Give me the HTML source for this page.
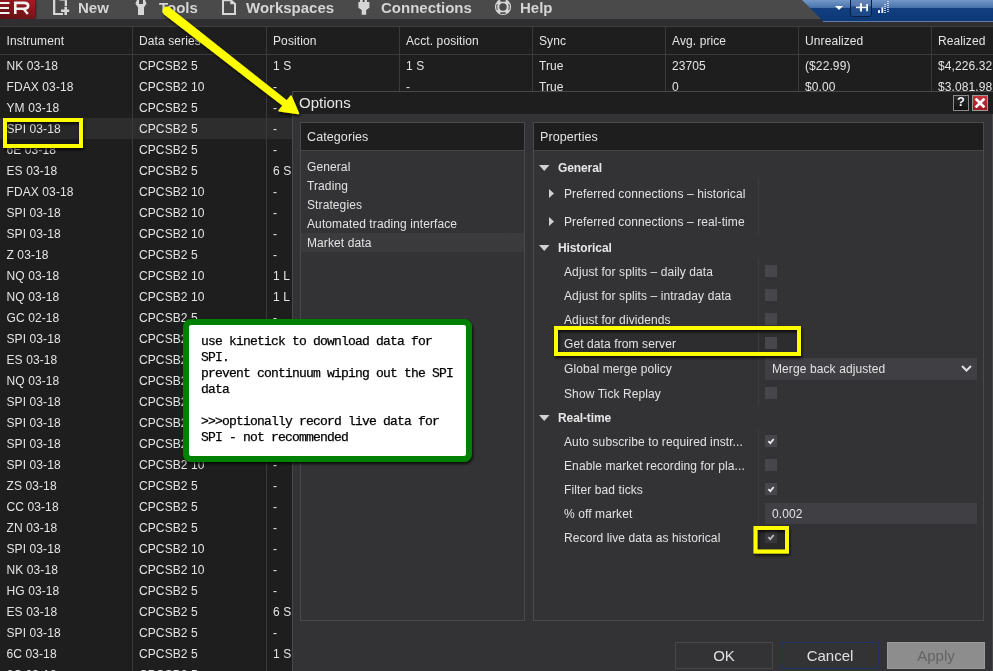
<!DOCTYPE html><html><head><meta charset="utf-8"><style>
*{margin:0;padding:0;box-sizing:border-box}
html,body{width:993px;height:671px;overflow:hidden;will-change:transform;background:#1e1e1e;font-family:"Liberation Sans",sans-serif;font-size:12px;color:#e4e4e4;letter-spacing:0.1px}
.a{position:absolute}
.t{position:absolute;white-space:nowrap;line-height:21px;height:21px}
.vl{position:absolute;width:1px;background:#3a3a3c}
.tbt{position:absolute;top:-1px;font-weight:bold;font-size:15px;color:#d4d4d4;line-height:18px;letter-spacing:0}
.p{position:absolute;white-space:nowrap;line-height:14px;color:#e2e2e2}
.pb{font-weight:bold;color:#e6e6e6;letter-spacing:-0.1px}
.cb{position:absolute;left:765px;width:12px;height:12px;background:#46464b}
.dv{position:absolute;left:758px;width:1px;background:#3c3c3e}
.btn{position:absolute;top:642px;height:27px;font-size:15px;line-height:25px;text-align:center;letter-spacing:0}
</style></head><body>

<div class="a" style="left:0;top:0;width:993px;height:19px;background:#4a4a4a"></div>
<div class="a" style="left:0;top:0;width:35px;height:19px;background:linear-gradient(20deg,#5c0e12 0%,#7a1519 45%,#a51c22 100%);box-shadow:1px 0 2px #222"></div>
<svg class="a" style="left:0;top:0" width="40" height="19"><g fill="none" stroke="#f2f2f2" stroke-width="2"><path d="M0 2.9 H9.5 M0 8 H9 M0 12.9 H9.5"/><path d="M15.3 14 V2.9 H24 Q28.2 2.9 28.2 5.8 Q28.2 8.7 24 8.7 H15.3" stroke-width="2.6"/><path d="M23.5 8.7 L27.8 14" stroke-width="2.4"/></g></svg>
<div class="tbt" style="left:78px">New</div>
<div class="tbt" style="left:159px">Tools</div>
<div class="tbt" style="left:246px">Workspaces</div>
<div class="tbt" style="left:381px">Connections</div>
<div class="tbt" style="left:520px">Help</div>
<svg class="a" style="left:0;top:0" width="993" height="19">
<path d="M53 0 H55.3 V12.9 H63 V14.9 H53 Z M64.7 0 H67 V6 H64.7 Z M61 9.6 H69.2 V12 H61 Z M64.4 6.8 H67 V15 H64.4 Z" fill="#d6d6d6"/>
<path d="M59.5 0 H66.8 V1 H59.5 Z" fill="#bdbdbd" opacity="0.7"/>
<path d="M137 0 L135.4 3.5 L138 7.6 V15 H144 V7.6 L146.5 3.5 L145 0 H143 V4 H139 V0 Z" fill="#d6d6d6"/>
<path fill-rule="evenodd" d="M222 0 H232 L236 3.5 V15 H222 Z M224 1.3 V12.9 H234 V4.2 H230.3 V1.3 Z" fill="#d6d6d6"/>
<path d="M360 0 H362.7 V2.1 H364.6 V0 H367 V2.1 H369.4 V7.8 L366.2 10 V14.7 H361.7 V10 L358.4 7.8 V2.1 H360 Z" fill="#d6d6d6"/>
<circle cx="503" cy="7" r="5.9" fill="none" stroke="#d6d6d6" stroke-width="4.4"/>
<rect x="500.3" y="-0.5" width="5.4" height="2.2" fill="#4a4a4a"/><rect x="500.3" y="12.3" width="5.4" height="1.6" fill="#4a4a4a"/>
<path d="M497.2 4 Q496.2 7 497.2 10 M508.8 4 Q509.8 7 508.8 10" stroke="#4a4a4a" stroke-width="1" fill="none"/>
</svg>
<div class="a" style="left:0;top:19px;width:993px;height:7px;background:#2f2f31"></div>
<div class="a" style="left:0;top:26px;width:993px;height:1px;background:#3d3d3f"></div>
<div class="a" style="left:0;top:54px;width:993px;height:1px;background:#3a3a3c"></div>
<svg class="a" style="left:0;top:0" width="993" height="24">
<defs><linearGradient id="bg1" x1="0" y1="0" x2="0" y2="22" gradientUnits="userSpaceOnUse">
<stop offset="0" stop-color="#7397c8"/><stop offset="0.34" stop-color="#4b75ae"/><stop offset="0.36" stop-color="#123f80"/><stop offset="1" stop-color="#0d3877"/></linearGradient></defs>
<path d="M802 0 L993 0 L993 22 L824 22 Z" fill="url(#bg1)"/>
<path d="M823 21.5 L993 21.5" stroke="#5f7aa3" stroke-width="1.2"/>
<path d="M835 6 L843 6 L839 10 Z" fill="#ffffff"/>
<defs><linearGradient id="bg2" x1="0" y1="0" x2="0" y2="1"><stop offset="0" stop-color="#6a8cc0"/><stop offset="0.45" stop-color="#5577ad"/><stop offset="0.5" stop-color="#234f8d"/><stop offset="1" stop-color="#1d4886"/></linearGradient></defs>
<rect x="850.5" y="-3" width="21" height="19.5" rx="2.5" fill="url(#bg2)" stroke="#0b1f45" stroke-width="1"/>
<path d="M856 7.4 H868" stroke="#f4f4f4" stroke-width="1.6" fill="none"/>
<path d="M859.9 3.2 H862 V11.6 H859.9 Z M866.2 3.9 H868 V11.3 H866.2 Z" fill="#f4f4f4"/>
<rect x="878" y="10.2" width="2" height="2.8" fill="#fff"/><rect x="881.4" y="7.4" width="1.8" height="5.6" fill="#fff"/>
<path d="M885 4 V13 M888 1 V13" stroke="#e6e6e6" stroke-width="1.6" stroke-dasharray="1 1" fill="none"/>
</svg>
<div class="t" style="left:6.5px;top:31px">Instrument</div>
<div class="t" style="left:139px;top:31px">Data series</div>
<div class="t" style="left:273px;top:31px">Position</div>
<div class="t" style="left:406px;top:31px">Acct. position</div>
<div class="t" style="left:539px;top:31px">Sync</div>
<div class="t" style="left:672px;top:31px">Avg. price</div>
<div class="t" style="left:805px;top:31px">Unrealized</div>
<div class="t" style="left:938px;top:31px">Realized</div>
<div class="a" style="left:0;top:118px;width:993px;height:21px;background:#2d2d2e"></div>
<div class="a" style="left:7px;top:122px;width:72px;height:22px;background:rgba(0,0,0,0.1)"></div>
<div class="vl" style="left:132px;top:27px;height:644px"></div>
<div class="vl" style="left:266px;top:27px;height:644px"></div>
<div class="vl" style="left:399px;top:27px;height:644px"></div>
<div class="vl" style="left:532px;top:27px;height:644px"></div>
<div class="vl" style="left:665px;top:27px;height:644px"></div>
<div class="vl" style="left:798px;top:27px;height:644px"></div>
<div class="vl" style="left:931px;top:27px;height:644px"></div>
<div class="t" style="left:6.5px;top:56px">NK 03-18</div>
<div class="t" style="left:139px;top:56px">CPCSB2 5</div>
<div class="t" style="left:273px;top:56px">1 S</div>
<div class="t" style="left:406px;top:56px">1 S</div>
<div class="t" style="left:539px;top:56px">True</div>
<div class="t" style="left:672px;top:56px">23705</div>
<div class="t" style="left:805px;top:56px">($22.99)</div>
<div class="t" style="left:938px;top:56px">$4,226.32</div>
<div class="t" style="left:6.5px;top:77px">FDAX 03-18</div>
<div class="t" style="left:139px;top:77px">CPCSB2 10</div>
<div class="t" style="left:273px;top:77px">-</div>
<div class="t" style="left:406px;top:77px">-</div>
<div class="t" style="left:539px;top:77px">True</div>
<div class="t" style="left:672px;top:77px">0</div>
<div class="t" style="left:805px;top:77px">$0.00</div>
<div class="t" style="left:938px;top:77px">$3,081.98</div>
<div class="t" style="left:6.5px;top:98px">YM 03-18</div>
<div class="t" style="left:139px;top:98px">CPCSB2 5</div>
<div class="t" style="left:273px;top:98px">-</div>
<div class="t" style="left:6.5px;top:119px">SPI 03-18</div>
<div class="t" style="left:139px;top:119px">CPCSB2 5</div>
<div class="t" style="left:273px;top:119px">-</div>
<div class="t" style="left:6.5px;top:140px">6E 03-18</div>
<div class="t" style="left:139px;top:140px">CPCSB2 5</div>
<div class="t" style="left:273px;top:140px">-</div>
<div class="t" style="left:6.5px;top:161px">ES 03-18</div>
<div class="t" style="left:139px;top:161px">CPCSB2 5</div>
<div class="t" style="left:273px;top:161px">6 S</div>
<div class="t" style="left:6.5px;top:182px">FDAX 03-18</div>
<div class="t" style="left:139px;top:182px">CPCSB2 10</div>
<div class="t" style="left:273px;top:182px">-</div>
<div class="t" style="left:6.5px;top:203px">SPI 03-18</div>
<div class="t" style="left:139px;top:203px">CPCSB2 10</div>
<div class="t" style="left:273px;top:203px">-</div>
<div class="t" style="left:6.5px;top:224px">SPI 03-18</div>
<div class="t" style="left:139px;top:224px">CPCSB2 10</div>
<div class="t" style="left:273px;top:224px">-</div>
<div class="t" style="left:6.5px;top:245px">Z 03-18</div>
<div class="t" style="left:139px;top:245px">CPCSB2 5</div>
<div class="t" style="left:273px;top:245px">-</div>
<div class="t" style="left:6.5px;top:266px">NQ 03-18</div>
<div class="t" style="left:139px;top:266px">CPCSB2 10</div>
<div class="t" style="left:273px;top:266px">1 L</div>
<div class="t" style="left:6.5px;top:287px">NQ 03-18</div>
<div class="t" style="left:139px;top:287px">CPCSB2 10</div>
<div class="t" style="left:273px;top:287px">1 L</div>
<div class="t" style="left:6.5px;top:308px">GC 02-18</div>
<div class="t" style="left:139px;top:308px">CPCSB2 5</div>
<div class="t" style="left:273px;top:308px">-</div>
<div class="t" style="left:6.5px;top:329px">SPI 03-18</div>
<div class="t" style="left:139px;top:329px">CPCSB2 5</div>
<div class="t" style="left:273px;top:329px">-</div>
<div class="t" style="left:6.5px;top:350px">ES 03-18</div>
<div class="t" style="left:139px;top:350px">CPCSB2 5</div>
<div class="t" style="left:273px;top:350px">6 S</div>
<div class="t" style="left:6.5px;top:371px">NQ 03-18</div>
<div class="t" style="left:139px;top:371px">CPCSB2 10</div>
<div class="t" style="left:273px;top:371px">1 L</div>
<div class="t" style="left:6.5px;top:392px">SPI 03-18</div>
<div class="t" style="left:139px;top:392px">CPCSB2 5</div>
<div class="t" style="left:273px;top:392px">-</div>
<div class="t" style="left:6.5px;top:413px">SPI 03-18</div>
<div class="t" style="left:139px;top:413px">CPCSB2 5</div>
<div class="t" style="left:273px;top:413px">-</div>
<div class="t" style="left:6.5px;top:434px">SPI 03-18</div>
<div class="t" style="left:139px;top:434px">CPCSB2 5</div>
<div class="t" style="left:273px;top:434px">-</div>
<div class="t" style="left:6.5px;top:455px">SPI 03-18</div>
<div class="t" style="left:139px;top:455px">CPCSB2 10</div>
<div class="t" style="left:273px;top:455px">-</div>
<div class="t" style="left:6.5px;top:476px">ZS 03-18</div>
<div class="t" style="left:139px;top:476px">CPCSB2 5</div>
<div class="t" style="left:273px;top:476px">-</div>
<div class="t" style="left:6.5px;top:497px">CC 03-18</div>
<div class="t" style="left:139px;top:497px">CPCSB2 5</div>
<div class="t" style="left:273px;top:497px">-</div>
<div class="t" style="left:6.5px;top:518px">ZN 03-18</div>
<div class="t" style="left:139px;top:518px">CPCSB2 5</div>
<div class="t" style="left:273px;top:518px">-</div>
<div class="t" style="left:6.5px;top:539px">SPI 03-18</div>
<div class="t" style="left:139px;top:539px">CPCSB2 10</div>
<div class="t" style="left:273px;top:539px">-</div>
<div class="t" style="left:6.5px;top:560px">NK 03-18</div>
<div class="t" style="left:139px;top:560px">CPCSB2 10</div>
<div class="t" style="left:273px;top:560px">-</div>
<div class="t" style="left:6.5px;top:581px">HG 03-18</div>
<div class="t" style="left:139px;top:581px">CPCSB2 5</div>
<div class="t" style="left:273px;top:581px">-</div>
<div class="t" style="left:6.5px;top:602px">ES 03-18</div>
<div class="t" style="left:139px;top:602px">CPCSB2 5</div>
<div class="t" style="left:273px;top:602px">6 S</div>
<div class="t" style="left:6.5px;top:623px">SPI 03-18</div>
<div class="t" style="left:139px;top:623px">CPCSB2 5</div>
<div class="t" style="left:273px;top:623px">-</div>
<div class="t" style="left:6.5px;top:644px">6C 03-18</div>
<div class="t" style="left:139px;top:644px">CPCSB2 5</div>
<div class="t" style="left:273px;top:644px">1 S</div>
<div class="t" style="left:6.5px;top:665px">6C 03-18</div>
<div class="t" style="left:139px;top:665px">CPCSB2 5</div>
<div class="t" style="left:273px;top:665px">-</div>
<div class="a" style="left:292px;top:91px;width:701px;height:580px;background:#333335;border:1px solid #48484a;border-right:none;border-bottom:none"></div>
<div class="a" style="left:293px;top:92px;width:700px;height:22px;background:#1e1e1e"></div>
<div class="a" style="left:992px;top:114px;width:1px;height:557px;background:#48484a"></div>
<div class="a" style="left:299px;top:92px;font-size:15px;line-height:22px;color:#e6e6e6;letter-spacing:0">Options</div>
<div class="a" style="left:953px;top:95px;width:16px;height:16px;background:linear-gradient(#2a2a2a,#111);border:1px solid #8a8a8a"></div>
<div class="a" style="left:953px;top:93px;width:16px;height:16px;font-weight:bold;font-size:13px;line-height:18px;text-align:center;color:#f4f8ff;letter-spacing:0">?</div>
<div class="a" style="left:972px;top:95px;width:16px;height:16px;background:linear-gradient(#c8343c,#a01820);border:1px solid #9a9a9a"></div>
<svg class="a" style="left:972px;top:95px" width="16" height="16"><path d="M4.5 4.5 L11.5 11.5 M11.5 4.5 L4.5 11.5" stroke="#fff" stroke-width="2.6" stroke-linecap="square"/></svg>
<div class="a" style="left:300px;top:122px;width:225px;height:499px;border:1px solid #4a4a4c;background:#333335"></div>
<div class="a" style="left:301px;top:123px;width:223px;height:27px;background:#1e1e1e"></div>
<div class="a" style="left:301px;top:150px;width:223px;height:1px;background:#444446"></div>
<div class="p" style="left:307px;top:129px;font-size:12.5px;line-height:16px">Categories</div>
<div class="a" style="left:301px;top:233px;width:223px;height:19px;background:linear-gradient(#3b3b3d,#3a3a3c)"></div>
<div class="p" style="left:307px;top:158px;line-height:19px">General</div>
<div class="p" style="left:307px;top:177px;line-height:19px">Trading</div>
<div class="p" style="left:307px;top:196px;line-height:19px">Strategies</div>
<div class="p" style="left:307px;top:215px;line-height:19px">Automated trading interface</div>
<div class="p" style="left:307px;top:234px;line-height:19px">Market data</div>
<div class="a" style="left:533px;top:122px;width:451px;height:499px;border:1px solid #4a4a4c;background:#333335"></div>
<div class="a" style="left:534px;top:123px;width:449px;height:27px;background:#1e1e1e"></div>
<div class="a" style="left:534px;top:150px;width:449px;height:1px;background:#444446"></div>
<div class="p" style="left:540px;top:129px;font-size:12.5px;line-height:16px">Properties</div>
<div class="a" style="left:558px;top:330px;width:239px;height:22px;background:rgba(0,0,0,0.1)"></div>
<svg class="a" style="left:539px;top:165px" width="11" height="7"><path d="M0 0 H10.5 L5.25 6 Z" fill="#d0d0d0"/></svg>
<div class="p pb" style="left:558px;top:161px">General</div>
<svg class="a" style="left:549px;top:189px" width="6" height="10"><path d="M0 0 L5 4.5 L0 9 Z" fill="#d0d0d0"/></svg>
<div class="p" style="left:564px;top:187px">Preferred connections – historical</div>
<svg class="a" style="left:549px;top:217px" width="6" height="10"><path d="M0 0 L5 4.5 L0 9 Z" fill="#d0d0d0"/></svg>
<div class="p" style="left:564px;top:215px">Preferred connections – real-time</div>
<div class="dv" style="top:178px;height:58px"></div>
<svg class="a" style="left:539px;top:245px" width="11" height="7"><path d="M0 0 H10.5 L5.25 6 Z" fill="#d0d0d0"/></svg>
<div class="p pb" style="left:558px;top:241px">Historical</div>
<div class="dv" style="top:258px;height:148px"></div>
<div class="p" style="left:564px;top:265px">Adjust for splits – daily data</div>
<div class="cb" style="top:265px"></div>
<div class="p" style="left:564px;top:289px">Adjust for splits – intraday data</div>
<div class="cb" style="top:289px"></div>
<div class="p" style="left:564px;top:313px">Adjust for dividends</div>
<div class="cb" style="top:313px"></div>
<div class="p" style="left:564px;top:337px">Get data from server</div>
<div class="cb" style="top:337px"></div>
<div class="p" style="left:564px;top:362px">Global merge policy</div>
<div class="p" style="left:564px;top:387px">Show Tick Replay</div>
<div class="cb" style="top:387px"></div>
<div class="a" style="left:765px;top:358px;width:212px;height:22px;background:#3f3f44"></div>
<div class="p" style="left:772px;top:362px">Merge back adjusted</div>
<svg class="a" style="left:961px;top:365px" width="12" height="8"><path d="M1 1 L5.5 5.5 L10 1" stroke="#e0e0e0" stroke-width="2" fill="none"/></svg>
<svg class="a" style="left:539px;top:415px" width="11" height="7"><path d="M0 0 H10.5 L5.25 6 Z" fill="#d0d0d0"/></svg>
<div class="p pb" style="left:558px;top:411px">Real-time</div>
<div class="dv" style="top:428px;height:125px"></div>
<div class="p" style="left:564px;top:435px">Auto subscribe to required instr...</div>
<div class="cb" style="top:435px"></div>
<svg class="a" style="left:765px;top:435px" width="12" height="12"><path d="M3.4 6.2 L5.3 8.2 L8.7 4" stroke="#f0f0f0" stroke-width="1.8" fill="none"/></svg>
<div class="p" style="left:564px;top:459px">Enable market recording for pla...</div>
<div class="cb" style="top:459px"></div>
<div class="p" style="left:564px;top:483px">Filter bad ticks</div>
<div class="cb" style="top:483px"></div>
<svg class="a" style="left:765px;top:483px" width="12" height="12"><path d="M3.4 6.2 L5.3 8.2 L8.7 4" stroke="#f0f0f0" stroke-width="1.8" fill="none"/></svg>
<div class="p" style="left:564px;top:507px">% off market</div>
<div class="p" style="left:564px;top:531px">Record live data as historical</div>
<div class="cb" style="top:531px"></div>
<svg class="a" style="left:765px;top:531px" width="12" height="12"><path d="M3.4 6.2 L5.3 8.2 L8.7 4" stroke="#f0f0f0" stroke-width="1.8" fill="none"/></svg>
<div class="a" style="left:765px;top:503px;width:212px;height:21px;background:#3f3f44"></div>
<div class="p" style="left:772px;top:507px">0.002</div>
<div class="btn" style="left:675px;width:98px;border:1px solid #48484a;background:#333335;color:#e0e0e0">OK</div>
<div class="btn" style="left:781px;width:98px;border:1px solid #1e3562;background:#333335;color:#e0e0e0">Cancel</div>
<div class="btn" style="left:887px;width:98px;border:1px solid #9a9a9a;background:#8d8d8d;color:#646464">Apply</div>
<svg class="a" style="left:0;top:0" width="993" height="671">
<defs><filter id="sh" x="-20%" y="-20%" width="140%" height="140%"><feGaussianBlur in="SourceAlpha" stdDeviation="1.5"/><feOffset dx="1" dy="1.5"/><feComponentTransfer><feFuncA type="linear" slope="0.8"/></feComponentTransfer><feMerge><feMergeNode/><feMergeNode in="SourceGraphic"/></feMerge></filter></defs>
<g filter="url(#sh)">
<path d="M164.23 14.55 L169.77 7.45 L288.16 101.24 L283.84 106.76 Z" fill="#ffff00"/><circle cx="167" cy="11" r="4.5" fill="#ffff00"/>
<path d="M298.4 113.4 L291 96 L279 110.7 Z" fill="#ffff00" stroke="#ffff00" stroke-width="1.5" stroke-linejoin="round"/>
<rect x="5" y="120" width="76" height="26" fill="none" stroke="#ffff00" stroke-width="4"/>
<rect x="556" y="328" width="243" height="26" fill="none" stroke="#ffff00" stroke-width="4"/>
<rect x="755.5" y="528" width="31.5" height="23.5" fill="rgba(0,0,0,0.12)" stroke="#ffff00" stroke-width="4"/>
<rect x="186" y="322" width="283" height="137" rx="5" ry="5" fill="#ffffff" stroke="#008000" stroke-width="6"/>
</g>
</svg>
<div class="a" style="left:201px;top:334px;font-family:'Liberation Mono',monospace;font-size:13px;line-height:16px;letter-spacing:-0.8px;color:#000;-webkit-text-stroke:0.25px #000;white-space:pre">use kinetick to download data for
SPI.
prevent continuum wiping out the SPI
data

&gt;&gt;&gt;optionally record live data for
SPI - not recommended</div>
</body></html>
